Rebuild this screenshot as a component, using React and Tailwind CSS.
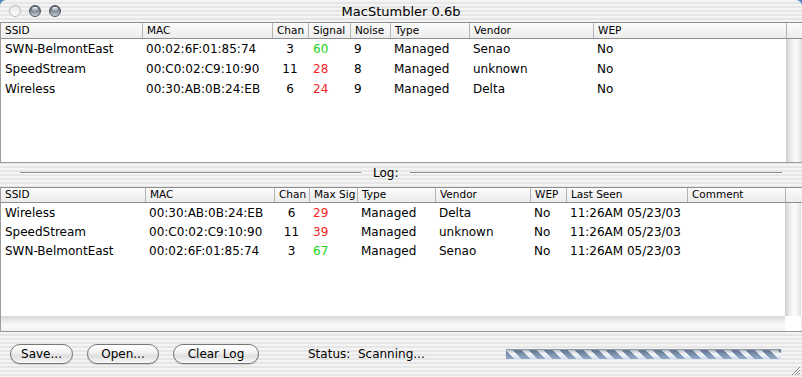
import React from "react";

const FONT = "[font-family:'DejaVu_Sans',sans-serif]";
const STRIPES =
  "bg-[repeating-linear-gradient(to_bottom,#f4f4f4_0px,#f4f4f4_2px,#e6e6e6_2px,#e6e6e6_4px)]";
const HEADER_BG = "bg-[linear-gradient(to_bottom,#fbfbfb,#ececec)]";
const VSCROLL =
  "bg-[linear-gradient(to_right,#cdcdcd,#e9e9e9_25%,#fbfbfb_55%,#f2f2f2_80%,#dcdcdc)]";

const GREEN = "text-[#21d421]";
const RED = "text-[#f52323]";

const topRows = [
  ["SWN-BelmontEast", "00:02:6F:01:85:74", "3", "60", "9", "Managed", "Senao", "No", GREEN],
  ["SpeedStream", "00:C0:02:C9:10:90", "11", "28", "8", "Managed", "unknown", "No", RED],
  ["Wireless", "00:30:AB:0B:24:EB", "6", "24", "9", "Managed", "Delta", "No", RED],
];

const logRows = [
  ["Wireless", "00:30:AB:0B:24:EB", "6", "29", "Managed", "Delta", "No", "11:26AM 05/23/03", "", RED],
  ["SpeedStream", "00:C0:02:C9:10:90", "11", "39", "Managed", "unknown", "No", "11:26AM 05/23/03", "", RED],
  ["SWN-BelmontEast", "00:02:6F:01:85:74", "3", "67", "Managed", "Senao", "No", "11:26AM 05/23/03", "", GREEN],
];

function HeadCell({ children, first }) {
  return (
    <div
      className={`h-full flex items-center pl-[4px] text-[10.5px] text-black overflow-hidden whitespace-nowrap ${
        first ? "" : "border-l border-[#b4b4b4]"
      }`}
    >
      {children}
    </div>
  );
}

function Light({ empty }) {
  if (empty) {
    return (
      <div className="w-[12px] h-[12px] rounded-full border border-[#b9b9b9] bg-[linear-gradient(to_bottom,#e9e9e9,#fdfdfd)]" />
    );
  }
  return (
    <div className="relative w-[12px] h-[12px] rounded-full border border-[#4e5560] bg-[linear-gradient(to_bottom,#59616b,#7d8792_50%,#c9d2dc)]">
      <div className="absolute left-[2px] top-[1px] w-[6px] h-[4px] rounded-full bg-[linear-gradient(to_bottom,#f2f5f8,rgba(255,255,255,0.2))]" />
    </div>
  );
}

function AquaButton({ children, w }) {
  return (
    <div
      className={`${w} h-[20px] rounded-full border border-[#777] bg-[linear-gradient(to_bottom,#ffffff,#f3f3f3_40%,#dedede_60%,#f8f8f8)] shadow-[0_1px_1px_rgba(0,0,0,0.15)] flex items-center justify-center text-[12px] text-black`}
    >
      {children}
    </div>
  );
}

export default function App() {
  return (
    <div className={`w-[802px] h-[377px] bg-[#4f86c0] ${FONT}`}>
      <div className={`relative w-full h-full rounded-t-[6px] overflow-hidden ${STRIPES} flex flex-col`}>
        {/* Title bar */}
        <div className="h-[22px] grid grid-cols-[1fr_auto_1fr] items-center">
          <div className="flex items-center gap-[8px] pl-[9px]">
            <Light empty />
            <Light />
            <Light />
          </div>
          <div className="text-[13px] text-black leading-none">MacStumbler 0.6b</div>
          <div />
        </div>

        {/* Top table */}
        <div className="border-l border-[#9c9c9c]">
          <div
            className={`h-[17px] border-y border-[#8e8e8e] ${HEADER_BG} grid grid-cols-[141px_130px_36px_42px_40px_79px_124px_193px_16px]`}
          >
            <HeadCell first>SSID</HeadCell>
            <HeadCell>MAC</HeadCell>
            <HeadCell>Chan</HeadCell>
            <HeadCell>Signal</HeadCell>
            <HeadCell>Noise</HeadCell>
            <HeadCell>Type</HeadCell>
            <HeadCell>Vendor</HeadCell>
            <HeadCell>WEP</HeadCell>
            <HeadCell />
          </div>
          <div className="h-[124px] border-b border-[#9a9a9a] flex bg-white">
            <div className="w-[785px] text-[12px] text-black">
              {topRows.map((r) => (
                <div
                  key={r[0]}
                  className="h-[20px] grid grid-cols-[141px_130px_36px_42px_40px_79px_124px_193px] items-center whitespace-nowrap"
                >
                  <div className="pl-[4px]">{r[0]}</div>
                  <div className="pl-[4px]">{r[1]}</div>
                  <div className="text-center">{r[2]}</div>
                  <div className={`pl-[5px] ${r[8]}`}>{r[3]}</div>
                  <div className="pl-[4px]">{r[4]}</div>
                  <div className="pl-[4px]">{r[5]}</div>
                  <div className="pl-[4px]">{r[6]}</div>
                  <div className="pl-[4px]">{r[7]}</div>
                </div>
              ))}
            </div>
            <div className={`w-[16px] ${VSCROLL}`} />
          </div>
        </div>

        {/* Splitter with Log: */}
        <div className="h-[24px] flex items-center pb-[4px] pl-[20px] pr-[20px]">
          <div className="w-[341px] h-[2px] border-t border-[#8a8a8a] border-b border-b-white" />
          <div className="mx-[12px] text-[12px] text-black leading-none">Log:</div>
          <div className="flex-1 h-[2px] border-t border-[#8a8a8a] border-b border-b-white" />
        </div>

        {/* Log table */}
        <div className="border-l border-[#9c9c9c]">
          <div
            className={`h-[16px] border-y border-[#8e8e8e] ${HEADER_BG} grid grid-cols-[144px_129px_35px_48px_78px_95px_36px_121px_98px_16px]`}
          >
            <HeadCell first>SSID</HeadCell>
            <HeadCell>MAC</HeadCell>
            <HeadCell>Chan</HeadCell>
            <HeadCell>Max Sig</HeadCell>
            <HeadCell>Type</HeadCell>
            <HeadCell>Vendor</HeadCell>
            <HeadCell>WEP</HeadCell>
            <HeadCell>Last Seen</HeadCell>
            <HeadCell>Comment</HeadCell>
            <HeadCell />
          </div>
          <div className="h-[113px] flex bg-white">
            <div className="w-[784px] text-[12px] text-black">
              {logRows.map((r) => (
                <div
                  key={r[0]}
                  className="h-[19px] grid grid-cols-[144px_129px_35px_48px_78px_95px_36px_121px_98px] items-center whitespace-nowrap"
                >
                  <div className="pl-[4px]">{r[0]}</div>
                  <div className="pl-[4px]">{r[1]}</div>
                  <div className="text-center">{r[2]}</div>
                  <div className={`pl-[4px] ${r[9]}`}>{r[3]}</div>
                  <div className="pl-[4px]">{r[4]}</div>
                  <div className="pl-[4px]">{r[5]}</div>
                  <div className="pl-[4px]">{r[6]}</div>
                  <div className="pl-[4px]">{r[7]}</div>
                  <div className="pl-[4px]">{r[8]}</div>
                </div>
              ))}
            </div>
            <div className={`w-[16px] ${VSCROLL}`} />
          </div>
          <div className="h-[16px] border-b border-[#9a9a9a] flex">
            <div className="w-[784px] bg-[linear-gradient(to_bottom,#d6d6d6,#eeeeee_35%,#fafafa_70%,#f0f0f0)]" />
            <div className="w-[16px] bg-white" />
          </div>
        </div>

        {/* Bottom bar */}
        <div className="flex-1 flex items-start pt-[12px] pl-[10px] pr-[21px]">
          <div className="flex items-center gap-[14px]">
            <AquaButton w="w-[63px]">Save...</AquaButton>
            <AquaButton w="w-[72px]">Open...</AquaButton>
            <AquaButton w="w-[86px]">Clear Log</AquaButton>
          </div>
          <div className="ml-[49px] h-[20px] flex items-center text-[12px] text-black whitespace-pre">
            Status:  Scanning...
          </div>
          <div className="ml-auto mt-[5px] w-[275px] h-[10px] border-t border-[#8f9aa8] bg-[linear-gradient(to_bottom,rgba(60,72,92,0.35),rgba(255,255,255,0.05)_45%,rgba(170,200,235,0.55)),repeating-linear-gradient(45deg,#7489a6_0px,#7489a6_6px,#f4f6f9_6px,#f4f6f9_11px)]" />
        </div>

        {/* Resize grip */}
        <svg
          className="absolute right-[1px] bottom-[1px]"
          width="12"
          height="12"
          viewBox="0 0 12 12"
        >
          <path d="M11 3 L3 11 M11 6 L6 11 M11 9 L9 11" stroke="#8a8a8a" strokeWidth="1" />
          <path d="M11 4 L4 11 M11 7 L7 11 M11 10 L10 11" stroke="#ffffff" strokeWidth="1" />
        </svg>
      </div>
    </div>
  );
}
